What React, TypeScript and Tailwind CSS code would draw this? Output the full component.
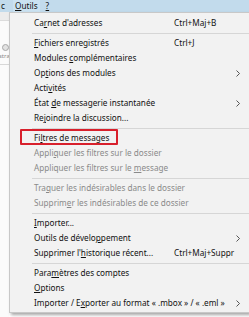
import React from 'react';

type Item = {
    label: React.ReactNode;
    shortcut?: string;
    sub?: boolean;
    disabled?: boolean;
    sep?: boolean;
    boxed?: boolean;
};

const U = ({ children }: { children: React.ReactNode }) => <span className="underline underline-offset-[1px]">{children}</span>;

const items: Item[] = [
    { label: <>Ca<U>r</U>net d'adresses</>, shortcut: 'Ctrl+Maj+B' },
    { sep: true, label: '' },
    { label: <><U>F</U>ichiers enregistrés</>, shortcut: 'Ctrl+J' },
    { label: <>Modules <U>c</U>omplémentaires</> },
    { label: <>Op<U>t</U>ions des modules</>, sub: true },
    { label: <>Acti<U>v</U>ités</> },
    { label: <>État <U>d</U>e messagerie instantanée</>, sub: true },
    { label: <>Re<U>j</U>oindre la discussion...</> },
    { sep: true, label: '' },
    { label: <>Fi<U>l</U>tres de messages</>, boxed: true },
    { label: <>Appli<U>q</U>uer les filtres sur le dossier</>, disabled: true },
    { label: <>Appliquer les filtres sur le <U>m</U>essage</>, disabled: true },
    { sep: true, label: '' },
    { label: <>Tra<U>q</U>uer les indésirables dans le dossier</>, disabled: true },
    { label: <>Supprim<U>e</U>r les indésirables de ce dossier</>, disabled: true },
    { sep: true, label: '' },
    { label: <><U>I</U>mporter...</> },
    { label: <>Outils de dévelo<U>p</U>pement</>, sub: true },
    { label: <>Supprimer l'<U>h</U>istorique récent...</>, shortcut: 'Ctrl+Maj+Suppr' },
    { sep: true, label: '' },
    { label: <>Para<U>m</U>ètres des comptes</> },
    { label: <><U>O</U>ptions</> },
    { label: <>Importer / E<U>x</U>porter au format « .mbox » / « .eml »</>, sub: true },
];

const Chevron = () => (
    <svg width="4" height="7" viewBox="0 0 4 7" className="text-[#444]">
        <path d="M0.5 0.5 L3.5 3.5 L0.5 6.5" fill="none" stroke="currentColor" strokeWidth="0.9" />
    </svg>
);

export default function App() {
    return (
        <div className="w-[249px] h-[317px] overflow-hidden bg-white flex flex-col text-[8.2px] leading-none text-[#111]" style={{ fontFamily: '"Noto Sans", "Open Sans", sans-serif' }}>
            {/* menu bar */}
            <div className="h-[12px] shrink-0 bg-[#c2dbec] flex items-center">
                <span className="pl-[1px] w-[13px]">c</span>
                <span className="h-full flex items-center px-[2px] bg-[#cbe2f1]"><U>O</U>utils</span>
                <span className="ml-[6px]"><U>?</U></span>
            </div>

            <div className="flex flex-1 min-h-0">
                {/* window content at left */}
                <div className="w-[9px] shrink-0 flex flex-col bg-[#fbfbfb]">
                    <div className="h-[9px] bg-[#ececec] border-b border-[#dcdcdc]" />
                    <div className="mt-[23px] ml-[2px] w-[7px] h-[7px] rounded-full border border-[#a8a8a8] bg-[#e2e2e2]" />
                    <span className="mt-[2px] text-[#8a8a8a] text-[6px] -ml-[1px]">stra</span>
                    <div className="mt-[5px] h-px bg-[#d8d8d8]" />
                </div>

                {/* dropdown */}
                <div className="flex-1 flex flex-col">
                    <div className="relative h-[301px] bg-[#f2f2f2] border-l border-t border-b border-[#c8c8c8] pt-[3px] shadow-[2px_2px_3px_rgba(0,0,0,0.35)]">
                        {items.map((it, i) =>
                            it.sep ? (
                                <div key={i} className="h-[5px] flex items-center pl-[22px]">
                                    <div className="h-px w-full bg-[#d6d6d6]" />
                                </div>
                            ) : (
                                <div key={i} className={`relative h-[15px] flex items-center pl-[24px] whitespace-nowrap ${it.disabled ? 'text-[#8a8a8a]' : ''}`}>
                                    <span>{it.label}</span>
                                    {it.shortcut && <span className="absolute left-[164px]">{it.shortcut}</span>}
                                    {it.sub && <span className="absolute left-[226px] top-[4px]"><Chevron /></span>}
                                    {it.boxed && <div className="absolute left-[10px] top-[-2px] w-[98px] h-[16px] border-2 border-[#d8202c] rounded-[1px]" />}
                                </div>
                            )
                        )}
                    </div>
                </div>
            </div>
        </div>
    );
}
